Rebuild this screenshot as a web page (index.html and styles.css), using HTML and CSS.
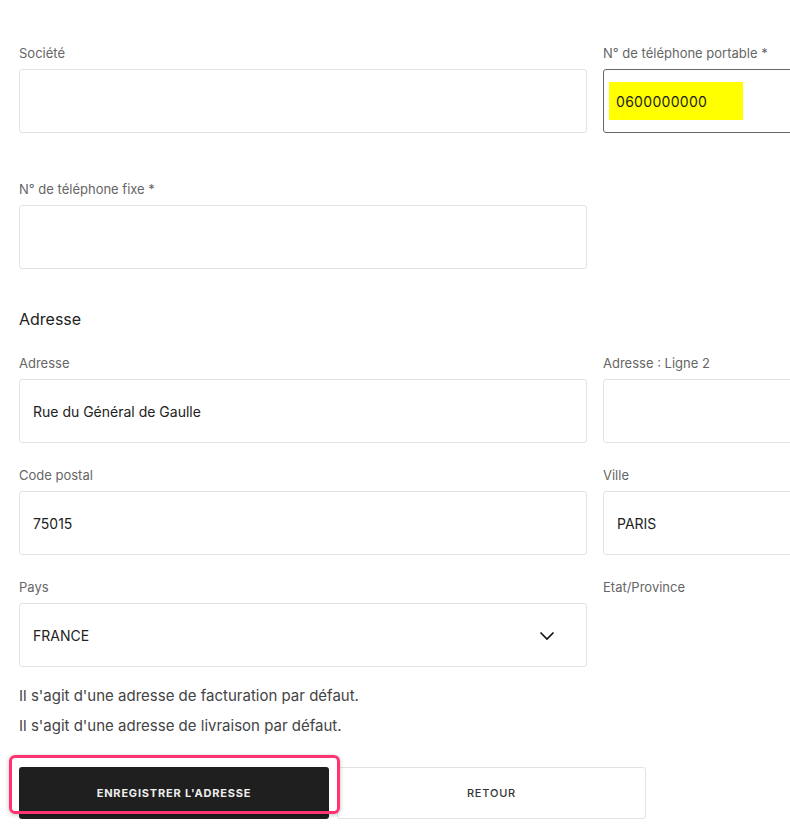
FILE: index.html
```html
<!DOCTYPE html>
<html lang="fr">
<head>
<meta charset="utf-8">
<link rel="stylesheet" href="styles.css">
</head>
<body>
<div class="page">
  <div class="grid grid-top">
    <div class="field">
      <label class="label">Société</label>
      <div class="input"></div>
    </div>
    <div class="field">
      <label class="label">N° de téléphone portable *</label>
      <div class="input input-dark"><span class="hl">0600000000</span></div>
    </div>
    <div class="field">
      <label class="label">N° de téléphone fixe *</label>
      <div class="input"></div>
    </div>
    <div></div>
  </div>

  <h2 class="heading">Adresse</h2>

  <div class="grid grid-addr">
    <div class="field">
      <label class="label">Adresse</label>
      <div class="input">Rue du Général de Gaulle</div>
    </div>
    <div class="field">
      <label class="label">Adresse : Ligne 2</label>
      <div class="input"></div>
    </div>
    <div class="field">
      <label class="label">Code postal</label>
      <div class="input">75015</div>
    </div>
    <div class="field">
      <label class="label">Ville</label>
      <div class="input">PARIS</div>
    </div>
    <div class="field">
      <label class="label">Pays</label>
      <div class="input select">FRANCE
        <svg class="chev" width="16" height="10" viewBox="0 0 16 10"><path d="M1.5 1.5 L8 8 L14.5 1.5" fill="none" stroke="#111" stroke-width="1.6"/></svg>
      </div>
    </div>
    <div class="field">
      <label class="label">Etat/Province</label>
    </div>
  </div>

  <p class="note">Il s'agit d'une adresse de facturation par défaut.</p>
  <p class="note">Il s'agit d'une adresse de livraison par défaut.</p>

  <div class="actions">
    <div class="btn-wrap">
      <button class="btn btn-primary">ENREGISTRER L'ADRESSE</button>
      <span class="focus-ring"></span>
    </div>
    <button class="btn btn-secondary">RETOUR</button>
  </div>
</div>
</body>
</html>
```
FILE: styles.css
```css
html, body {
  margin: 0;
  padding: 0;
  background: #fff;
  overflow: hidden;
}
body {
  font-family: Inter, "Noto Sans", sans-serif;
  color: #222;
}
.page {
  width: 1200px;
  padding: 45px 0 0 19px;
}
.grid {
  display: grid;
  grid-template-columns: 568px 568px;
  column-gap: 16px;
}
.grid-top { row-gap: 48px; }
.grid-addr { row-gap: 24px; }
.field {
  display: flex;
  flex-direction: column;
}
.label {
  font-size: 13px;
  line-height: 16px;
  color: #666;
  margin-bottom: 8px;
}
.input {
  height: 64px;
  box-sizing: border-box;
  border: 1px solid #e2e2e2;
  border-radius: 3px;
  display: flex;
  align-items: center;
  padding-left: 13px;
  font-size: 14px;
  color: #222;
}
.input-dark {
  border-color: #666;
  padding-left: 5px;
}
.hl {
  background: #ffff00;
  width: 134px;
  height: 38px;
  box-sizing: border-box;
  display: flex;
  align-items: center;
  padding-left: 7px;
  font-size: 14px;
  letter-spacing: 0.3px;
  color: #222;
}
.select {
  justify-content: space-between;
  padding-right: 31px;
}
.chev { display: block; margin-top: 2px; }
.heading {
  margin: 40px 0 26px 0;
  font-size: 16px;
  line-height: 20px;
  font-weight: 400;
  color: #222;
}
.note {
  margin: 0;
  font-size: 15px;
  line-height: 30px;
  color: #444;
}
.note:first-of-type { margin-top: 14px; }
.actions {
  display: flex;
  gap: 8px;
  margin-top: 26px;
}
.btn-wrap { position: relative; }
.btn {
  width: 310px;
  height: 52px;
  border-radius: 3px;
  font-family: Inter, "Noto Sans", sans-serif;
  font-size: 11px;
  letter-spacing: 0.8px;
  cursor: pointer;
  display: block;
}
.btn-primary {
  background: #1f1f1f;
  color: #eee;
  border: none;
  font-weight: 700;
}
.btn-secondary {
  background: #fff;
  color: #333;
  border: 1px solid #e2e2e2;
  font-weight: 500;
  width: 309px;
}
.focus-ring {
  position: absolute;
  left: -10px;
  top: -12px;
  width: 331px;
  height: 59px;
  box-sizing: border-box;
  border: 3px solid #ff3370;
  border-radius: 6px;
  box-shadow: 0 1px 4px rgba(0,0,0,0.25);
  pointer-events: none;
}
```
